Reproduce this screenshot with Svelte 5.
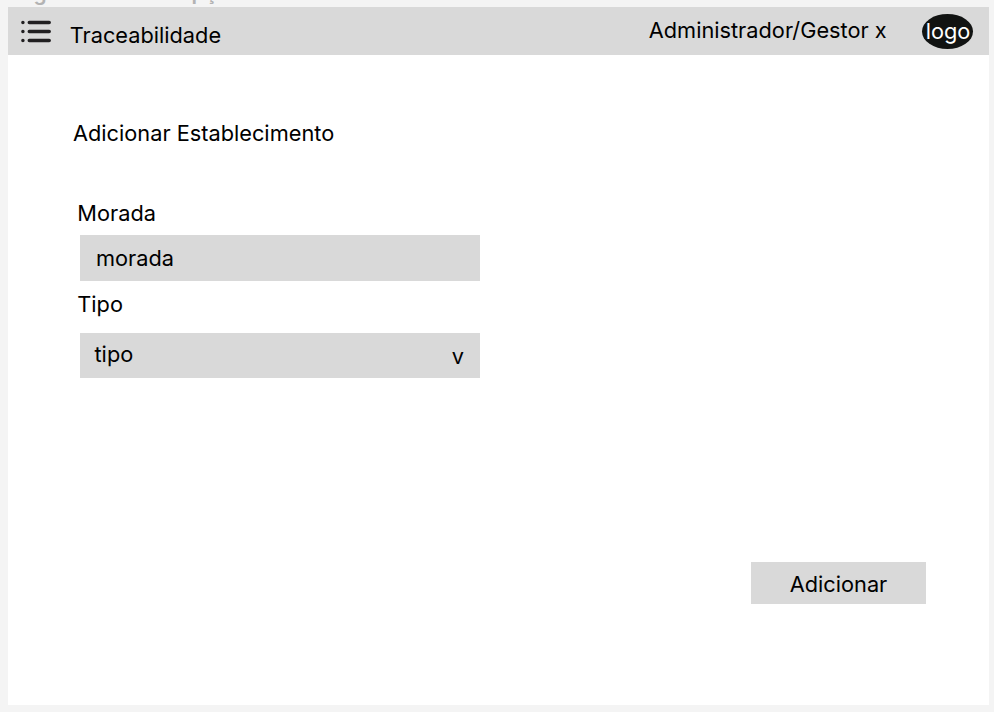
<script>
  let address = $state('morada');
</script>

<div class="canvas">
  <div class="frame-name">Página inicial recepção</div>
  <main>
    <header>
      <svg class="menu" width="30" height="24" viewBox="0 0 30 24" aria-hidden="true">
        <g fill="none" stroke="#211f21" stroke-width="3.5" stroke-linecap="round">
          <path d="M8.3 2.5H28.2M8.3 11.5H28.2M8.3 20.5H28.2" />
          <path d="M1.9 2.5h.01M1.9 11.5h.01M1.9 20.5h.01" />
        </g>
      </svg>
      <span class="brand">Traceabilidade</span>
      <span class="user">Administrador/Gestor x</span>
      <span class="logo">logo</span>
    </header>
    <h1>Adicionar Establecimento</h1>
    <form>
      <label for="address">Morada</label>
      <input id="address" bind:value={address} />
      <label class="type-label" for="type">Tipo</label>
      <button id="type" class="select" type="button"><span>tipo</span><span class="arrow">v</span></button>
      <button class="submit" type="button">Adicionar</button>
    </form>
  </main>
</div>

<style>
  :global(body) { background: #f4f4f4; }
  .canvas {
    box-sizing: border-box;
    width: 994px;
    height: 712px;
    padding-left: 8px;
    overflow: hidden;
    background: #f4f4f4;
    font: 21.75px/28px Inter, sans-serif;
    color: #000;
  }
  .frame-name {
    height: 7px;
    display: flex;
    align-items: flex-end;
    font-size: 21px;
    font-weight: 600;
    color: #b3b3b3;
  }
  main {
    width: 981px;
    height: 697.5px;
    background: #fff;
  }
  header {
    display: flex;
    align-items: flex-start;
    height: 48px;
    background: #d9d9d9;
  }
  .menu { margin: 13px 0 0 13px; }
  .brand { margin: 14px 0 0 18.7px; }
  .user { margin: 9px 0 0 auto; }
  .logo {
    box-sizing: border-box;
    display: flex;
    justify-content: center;
    width: 51px;
    height: 35px;
    margin: 7px 16px 0 35.3px;
    padding-left: 1px;
    border-radius: 50%;
    background: #111312;
    color: #fff;
    line-height: 34px;
  }
  h1 {
    margin: 0;
    padding: 64px 0 0 65px;
    font-size: inherit;
    font-weight: 400;
  }
  form {
    display: flex;
    flex-direction: column;
    align-items: flex-start;
    padding: 52px 0 0 72px;
  }
  label { margin-left: -2.7px; }
  input, button {
    box-sizing: border-box;
    border: 0;
    border-radius: 0;
    margin: 0;
    background: #d9d9d9;
    color: #000;
    font: inherit;
  }
  input {
    width: 400px;
    height: 46px;
    margin-top: 8px;
    padding: 0 16px;
  }
  .type-label { margin-top: 9px; }
  .select {
    display: flex;
    justify-content: space-between;
    width: 400px;
    height: 45px;
    margin-top: 15px;
    padding: 7px 16px 0 14.5px;
  }
  .arrow { padding-top: 2px; }
  .submit {
    align-self: flex-end;
    width: 175px;
    height: 42px;
    margin: 184px 63px 0 0;
    padding: 2px 0 0;
  }
</style>
